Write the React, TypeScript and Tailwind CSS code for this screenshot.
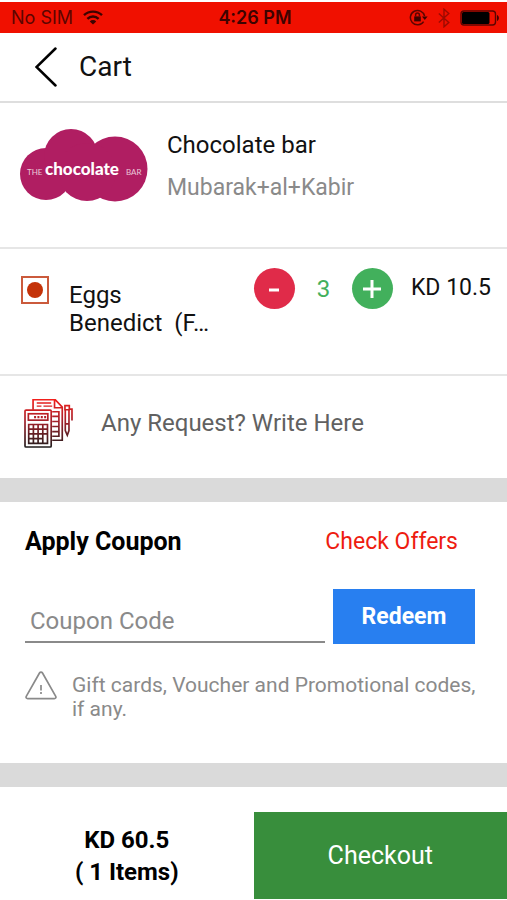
import { ReactNode, useState } from 'react';

const StatusBar = () => (
  <div className="mt-[2px] grid h-[31px] grid-cols-3 items-center bg-[#f01000] pr-2 pl-[11px] font-['Inter',sans-serif] text-lg leading-5">
    <div className="flex items-center gap-[10px] text-[#5c0500]">
      <span>No SIM</span>
      <svg width="20" height="15" viewBox="0 0 20 15" fill="none" stroke="#3d0300" strokeWidth="2.4">
        <path d="M1 5.2a13 13 0 0 1 18 0" />
        <path d="M4.4 8.8a8 8 0 0 1 11.2 0" />
        <path d="M10 14.6 6.8 11.4a4.6 4.6 0 0 1 6.4 0Z" fill="#3d0300" stroke="none" />
      </svg>
    </div>
    <span className="text-center font-semibold text-[#3d0300]">4:26 PM</span>
    <div className="flex items-center justify-end gap-[10px]">
      <svg width="19" height="17" viewBox="0 0 19 17" fill="none" stroke="#5c0500" strokeWidth="1.5">
        <path d="M14.6 12.6A7.2 7.2 0 1 1 15.6 7" />
        <path d="M13 7.4h5.6l-2.800 3.6Z" fill="#3d0300" stroke="none" />
        <rect x="5.2" y="7.4" width="6.6" height="5" fill="#3d0300" stroke="none" />
        <path d="M6.6 7.6V6a1.9 1.9 0 0 1 3.8 0v1.6" />
      </svg>
      <svg width="12" height="20" viewBox="0 0 12 20" fill="none" stroke="#9c0a00" strokeWidth="1.4">
        <path d="M.8 5.4 10.8 14.4 6 18.8V1.2l4.8 4.4L.8 14.6" />
      </svg>
      <svg width="39" height="16" viewBox="0 0 39 16" fill="none">
        <rect x="1" y="1" width="34.500" height="14" rx="3" stroke="#5c0500" strokeWidth="1.4" />
        <rect x="2" y="2" width="27.500" height="12" rx="1.500" fill="#000" />
        <path d="M37 5c2.500.8 2.500 5.200 0 6Z" fill="#3d0300" />
      </svg>
    </div>
  </div>
);

const StoreLogo = () => (
  <svg width="130" height="74" viewBox="0 0 130 74" role="img" aria-label="The Chocolate Bar" className="shrink-0">
    <g fill="#b01e62">
      <circle cx="27" cy="46" r="26" />
      <circle cx="52" cy="28" r="27" />
      <circle cx="96" cy="41" r="32.500" />
      <circle cx="68" cy="44" r="29" />
      <rect x="30" y="25" width="50" height="30" />
    </g>
    <g fill="#fff">
      <text x="8" y="47" fontSize="8" fontFamily="Lato, sans-serif" fillOpacity=".75">THE</text>
      <text x="26" y="47" fontSize="17" fontFamily="Lato, sans-serif" fontWeight="900">chocolate</text>
      <text x="107" y="47" fontSize="8" fontFamily="Lato, sans-serif" fillOpacity=".75">BAR</text>
    </g>
  </svg>
);

const NotesIcon = () => (
  <svg width="49" height="49" viewBox="72 86 146 146" fill="none" stroke="url(#notes)" strokeWidth="5" className="shrink-0">
    <defs>
      <linearGradient id="notes" gradientUnits="userSpaceOnUse" x1="0" y1="86" x2="0" y2="232">
        <stop offset="0" stopColor="#f3201c" />
        <stop offset=".45" stopColor="#a3202a" />
        <stop offset="1" stopColor="#1c1c1c" />
      </linearGradient>
    </defs>
    <path d="M99 118V88h66l21 22v99h-30M163 88v24h23" />
    <path d="M110 98h43M110 107h14M130 107h26" strokeWidth="4" />
    <path d="M156 124h20v73h-20M156 138h20M156 153h20M156 168h20M156 183h20" />
    <rect x="75" y="119" width="78" height="110" rx="3" />
    <rect x="85" y="130" width="58" height="19" />
    <path d="M102 140h36" strokeWidth="7" strokeDasharray="6 4" />
    <path d="M86 162h56v56H86zM100 162v56M114 162v56M128 162v56M86 176h56M86 190h56M86 204h42" />
    <path d="M194 106h13v12h-13zM195 118h11v62l-5 14-6-14zM195 160h11M207 116h8v34" />
  </svg>
);

const WarningIcon = () => (
  <svg width="32" height="29" viewBox="0 0 32 29" fill="none" stroke="#8a8a8a" strokeWidth="1.7" className="shrink-0">
    <path d="M14.500 2 1.400 25.200c-.8 1.400-.1 2.400 1.300 2.400h26.600c1.400 0 2.100-1 1.300-2.400L17.500 2c-.8-1.300-2.200-1.300-3 0Z" />
    <path d="M16 14v5.500M16 21v2" />
  </svg>
);

const RoundButton = ({ label, className, onClick, children }: { label: string; className: string; onClick: () => void; children: ReactNode }) => (
  <button aria-label={label} onClick={onClick} className={`flex size-[41px] items-center justify-center rounded-full ${className}`}>
    <svg width="18" height="18" viewBox="0 0 18 18" stroke="#fff" strokeWidth="3">
      {children}
    </svg>
  </button>
);

const App = () => {
  const [count, setCount] = useState(3);

  return (
    <div className="min-h-screen bg-white font-['Roboto',sans-serif] text-2xl leading-7 text-[#111]">
      <StatusBar />

      <header className="flex h-[70px] items-center gap-[21px] border-b-2 border-[#dedede] pl-[35px]">
        <button aria-label="Back">
          <svg width="23" height="40" viewBox="0 0 23 40" fill="none" stroke="#000" strokeWidth="2.500" strokeLinecap="round">
            <path d="M20.500 1.500 1.500 20l19 18.500" />
          </svg>
        </button>
        <h1 className="text-[28px]">Cart</h1>
      </header>

      <section className="flex h-[146px] gap-[18px] border-b-2 border-[#e6e6e6] pt-[25px] pl-[19px]">
        <StoreLogo />
        <div className="space-y-[15px] pt-[3px]">
          <h2>Chocolate bar</h2>
          <p className="text-[23px] text-[#8a8a8a]">Mubarak+al+Kabir</p>
        </div>
      </section>

      <section className="flex h-[127px] items-start border-b-2 border-[#e6e6e6] pt-[19px] pr-4 pl-[21px]">
        <div className="mt-2 flex size-7 shrink-0 items-center justify-center border-2 border-[#cb5a3c]">
          <div className="size-4 rounded-full bg-[#c43208]" />
        </div>
        <p className="mt-[13px] ml-5 flex-1 whitespace-nowrap">
          Eggs
          <br />
          Benedict&nbsp; (F…
        </p>
        <div className="mr-[18px] flex items-center">
          <RoundButton label="Remove one" className="bg-[#e02b49]" onClick={() => setCount(Math.max(0, count - 1))}>
            <path d="M4 10h10" />
          </RoundButton>
          <span className="w-[57px] text-center text-[#42b05c]">{count}</span>
          <RoundButton label="Add one" className="bg-[#42b05c]" onClick={() => setCount(count + 1)}>
            <path d="M0 9h18M9 0v18" />
          </RoundButton>
        </div>
        <span className="mt-[6px] text-[23px]">KD 10.5</span>
      </section>

      <label className="flex h-[102px] items-center gap-7 pr-4 pb-2 pl-6">
        <NotesIcon />
        <input
          type="text"
          aria-label="Request"
          placeholder="Any Request? Write Here"
          className="min-w-0 flex-1 outline-none placeholder:text-[#616161]"
        />
      </label>

      <div className="h-6 bg-[#dadada]" />

      <section className="h-[261px] pt-[26px] pr-4 pl-[25px]">
        <div className="flex items-center justify-between pr-[33px]">
          <h2 className="text-[25px] font-bold text-black">Apply Coupon</h2>
          <a href="#offers" className="text-[23px] text-[#ee1c10]">Check Offers</a>
        </div>
        <div className="mt-[33px] flex items-end gap-2 pr-4">
          <input
            type="text"
            aria-label="Coupon code"
            placeholder="Coupon Code"
            className="mb-px h-11 min-w-0 flex-1 border-b-2 border-[#8a8a8a] px-[5px] pt-px outline-none placeholder:text-[#8a8a8a]"
          />
          <button className="h-[55px] w-[142px] bg-[#287ff0] text-[23px] font-bold text-white">Redeem</button>
        </div>
        <div className="mt-[27px] flex gap-[15px] text-[21px] leading-6 text-[#8a8a8a]">
          <WarningIcon />
          <p className="pt-[2px]">Gift cards, Voucher and Promotional codes, if any.</p>
        </div>
      </section>

      <div className="h-6 bg-[#dadada]" />

      <footer className="flex items-stretch pt-[25px] pb-px">
        <div className="flex w-1/2 flex-col items-center justify-center text-center leading-8 font-bold text-black">
          <span>KD 60.5</span>
          <span>( 1 Items)</span>
        </div>
        <button className="h-[87px] w-1/2 bg-[#388e3c] text-[25px] text-white">Checkout</button>
      </footer>
    </div>
  );
};

export default App;
